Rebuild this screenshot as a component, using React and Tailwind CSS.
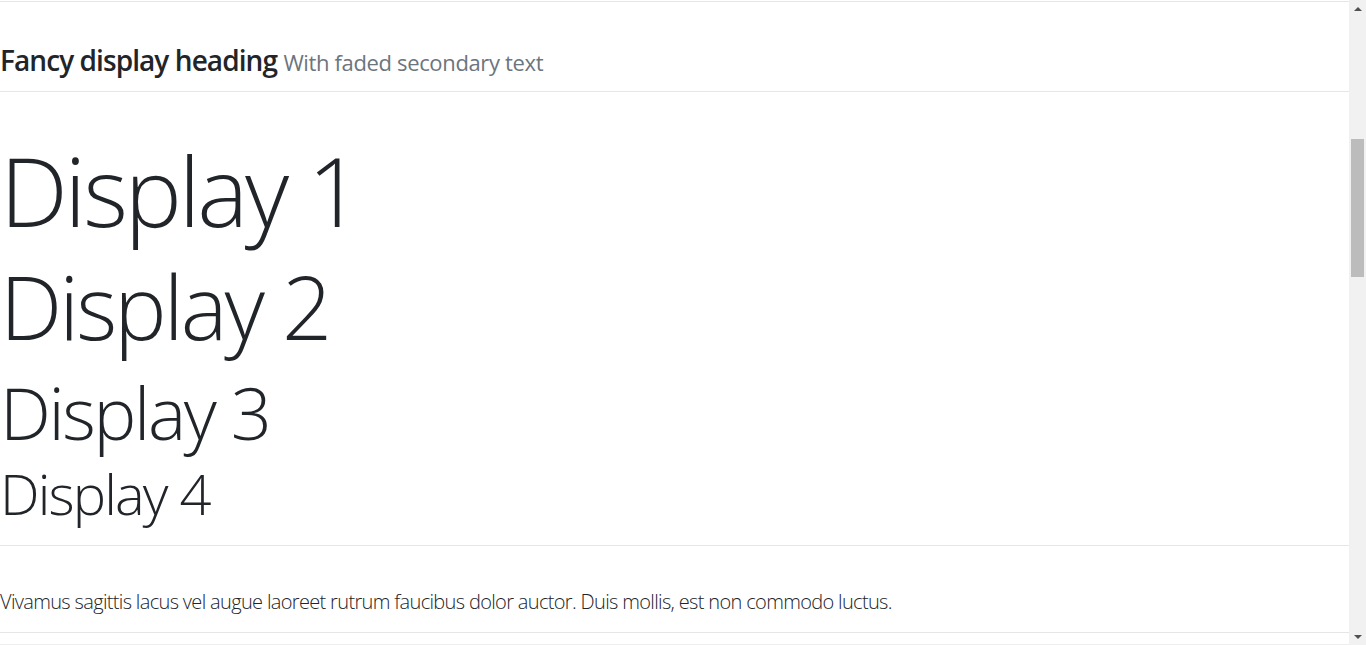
import React from 'react';

function Scrollbar() {
  return (
    <div className="flex h-full w-[17px] shrink-0 flex-col items-center bg-[#f1f1f1]">
      <div className="flex h-[17px] w-full items-center justify-center">
        <div className="h-0 w-0 border-x-[4px] border-b-[4px] border-x-transparent border-b-[#505050]" />
      </div>
      <div className="mt-[122px] h-[138px] w-[13px] bg-[#bcbcbc]" />
      <div className="flex-1" />
      <div className="flex h-[17px] w-full items-center justify-center">
        <div className="h-0 w-0 border-x-[4px] border-t-[4px] border-x-transparent border-t-[#505050]" />
      </div>
    </div>
  );
}

export default function App() {
  return (
    <div className="flex h-[645px] w-[1366px] overflow-hidden bg-white text-[#212529] font-['Open_Sans','Noto_Sans',sans-serif]">
      <main className="flex w-[1349px] flex-col">
        <hr className="mt-px border-t border-[#e6e6e6]" />

        {/* Fancy heading */}
        <div className="flex h-[89px] items-end pb-[13px]">
          <h3 className="text-[28px] font-semibold leading-[1.2] tracking-[-0.033em]">
            Fancy display heading{' '}
            <small className="text-[22px] font-normal tracking-[-0.016em] text-[#6c757d]">With faded secondary text</small>
          </h3>
        </div>
        <hr className="border-t border-[#e6e6e6]" />

        {/* Display headings */}
        <div className="flex flex-col pt-[40px]">
          <h1 className="mb-[7px] text-[96px] font-light leading-[1.2] tracking-[-0.033em]">Display 1</h1>
          <h1 className="mb-[9px] text-[88px] font-light leading-[1.2] tracking-[-0.033em]">Display 2</h1>
          <h1 className="mb-[5px] text-[72px] font-light leading-[1.2] tracking-[-0.033em]">Display 3</h1>
          <h1 className="text-[56px] font-light leading-[1.2] tracking-[-0.033em]">Display 4</h1>
        </div>
        <hr className="mt-[18px] border-t border-[#e6e6e6]" />

        {/* Lead */}
        <div className="flex h-[86px] items-end pb-[15px]">
          <p className="text-[20px] font-light leading-[1.5] tracking-[-0.033em]">
            Vivamus sagittis lacus vel augue laoreet rutrum faucibus dolor auctor. Duis mollis, est non commodo luctus.
          </p>
        </div>
        <hr className="border-t border-[#e6e6e6]" />
        <hr className="mt-[11px] border-t border-[#eeeeee]" />
      </main>
      <Scrollbar />
    </div>
  );
}
